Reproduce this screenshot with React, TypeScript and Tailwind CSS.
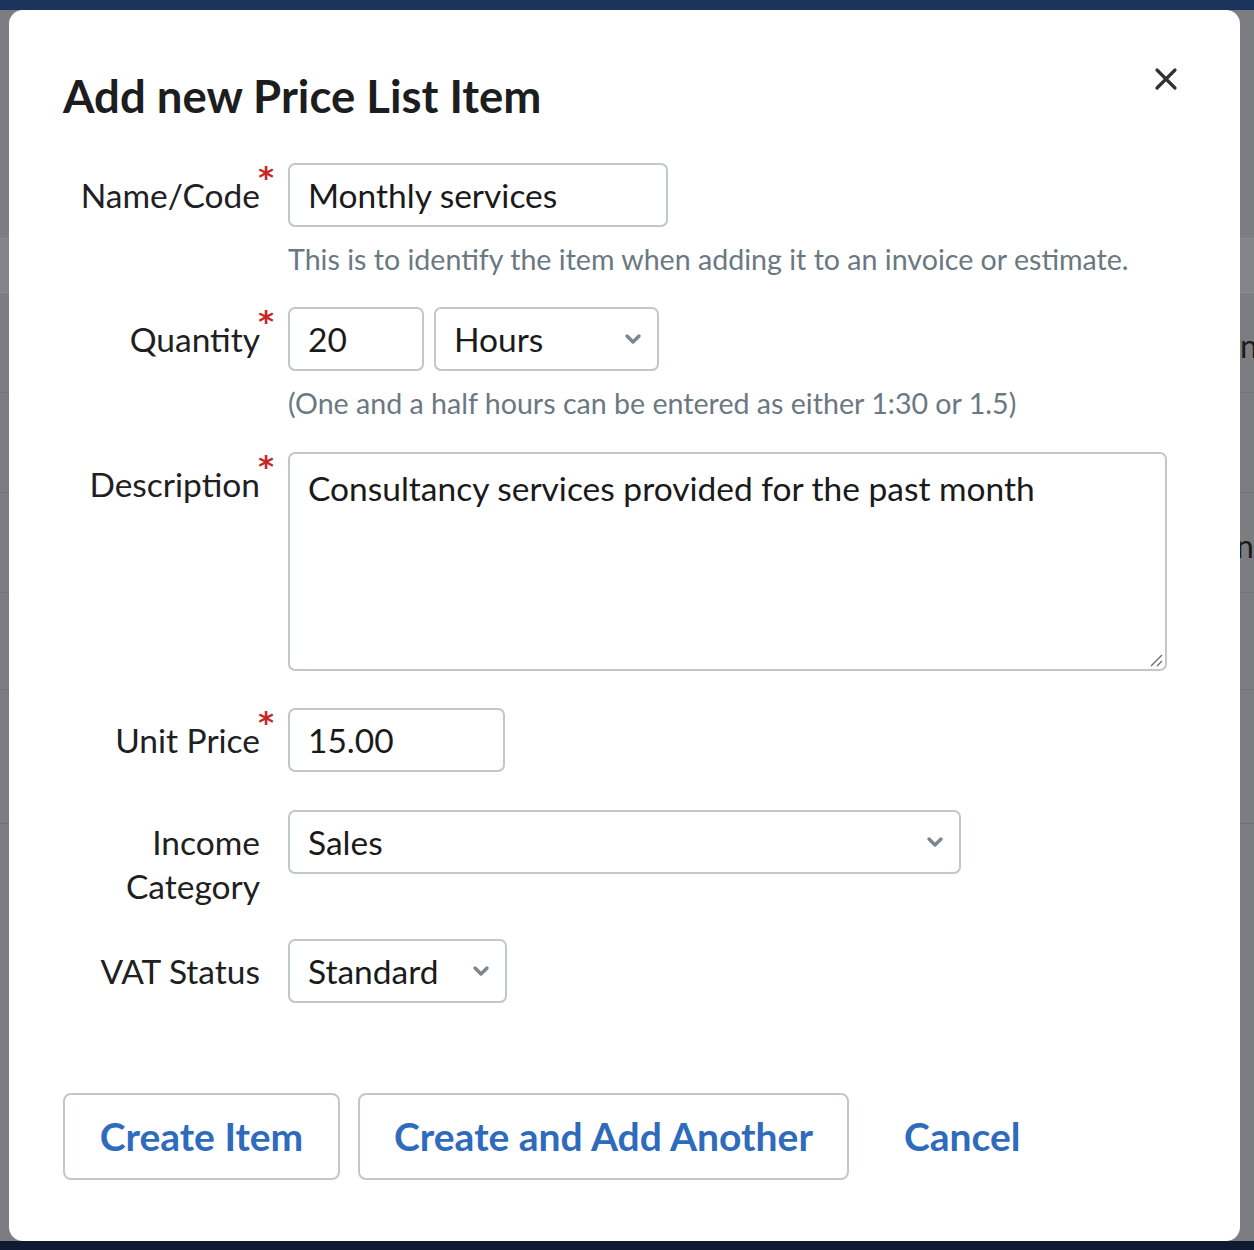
import React from "react";

const font = { fontFamily: "Lato, 'Noto Sans', sans-serif" };

function Chevron({ className = "" }: { className?: string }) {
  return (
    <svg className={className} width="18" height="12" viewBox="0 0 18 12" fill="none">
      <path d="M3 3 L9 9 L15 3" stroke="#7b868e" strokeWidth="3.4" strokeLinecap="round" strokeLinejoin="round" />
    </svg>
  );
}

function Label({ children, required }: { children: React.ReactNode; required?: boolean }) {
  return (
    <div className="w-[225px] shrink-0 pr-[28px] pt-[10px] text-right text-[33.5px] leading-[44px] text-[#1e2022]">
      <span className="relative">
        {children}
        {required && (
          <span
            className="absolute -right-[14px] -top-[12px] text-[30px] font-bold leading-none text-[#c62828]"
            style={{ fontFamily: "'DejaVu Sans', sans-serif" }}
          >
            *
          </span>
        )}
      </span>
    </div>
  );
}

const box = "h-[64px] rounded-[7px] border-2 border-[#c2c7cb] bg-white px-[18px] text-[33.5px] text-[#1a1a1a] flex items-center";

export default function App() {
  return (
    <div className="relative h-[1250px] w-[1254px] overflow-hidden bg-[#7c7d80]" style={font}>
      {/* background page */}
      <div className="h-[10px] bg-[#1a345c]" />
      <div className="absolute left-0 right-0 top-[238px] h-[55px] bg-[#838487] border-y border-[#8a8b8e]" />
      <div className="absolute left-0 right-0 top-[392px] border-t border-[#727376]" />
      <div className="absolute left-0 right-0 top-[492px] border-t border-[#727376]" />
      <div className="absolute left-0 right-0 top-[592px] border-t border-[#727376]" />
      <div className="absolute left-0 right-0 top-[689px] border-t border-[#727376]" />
      <div className="absolute left-0 right-0 top-[823px] border-t border-[#6f7073]" />
      <div className="absolute left-[1240px] top-[322px] text-[32px] text-[#1b1b1b]">n</div>
      <div className="absolute left-[1236px] top-[522px] text-[32px] text-[#1b1b1b]">nc</div>
      <div className="absolute bottom-0 left-0 right-0 h-[9px] bg-[#0f1b33]" />

      {/* modal */}
      <div className="absolute left-[9px] top-[10px] h-[1231px] w-[1231px] rounded-[14px] bg-white">
        <div className="relative px-[54px] pt-[58px]">
          <h1 className="text-[45.5px] font-bold leading-[56px] text-[#1c1d1f]">Add new Price List Item</h1>
          <svg className="absolute right-[62px] top-[57px]" width="24" height="24" viewBox="0 0 24 24" fill="none">
            <path d="M3 3 L21 21 M21 3 L3 21" stroke="#2d3236" strokeWidth="3.2" strokeLinecap="round" />
          </svg>

          <div className="mt-[39px] flex">
            <Label required>Name/Code</Label>
            <div>
              <div className={`${box} w-[380px]`}>Monthly services</div>
              <div className="mt-[14px] text-[28.6px] leading-[36px] text-[#6b7882]">
                This is to identify the item when adding it to an invoice or estimate.
              </div>
            </div>
          </div>

          <div className="mt-[30px] flex">
            <Label required>Quantity</Label>
            <div>
              <div className="flex gap-[10px]">
                <div className={`${box} w-[136px]`}>20</div>
                <div className={`${box} w-[225px] justify-between pr-[15px]`}>
                  Hours
                  <Chevron />
                </div>
              </div>
              <div className="mt-[14px] text-[28.6px] leading-[36px] text-[#6b7882]">
                (One and a half hours can be entered as either 1:30 or 1.5)
              </div>
            </div>
          </div>

          <div className="mt-[31px] flex">
            <Label required>Description</Label>
            <div className="relative h-[219px] w-[879px] rounded-[7px] border-2 border-[#c2c7cb] px-[18px] pt-[12px] text-[33.5px] leading-[44px] text-[#1a1a1a]">
              Consultancy services provided for the past month
              <svg className="absolute bottom-[2px] right-[2px]" width="16" height="16" viewBox="0 0 16 16" fill="none">
                <path d="M15 4 L4 15 M15 10 L10 15" stroke="#6b6f73" strokeWidth="1.4" />
              </svg>
            </div>
          </div>

          <div className="mt-[37px] flex">
            <Label required>Unit Price</Label>
            <div className={`${box} w-[217px]`}>15.00</div>
          </div>

          <div className="mt-[38px] flex">
            <Label>
              Income
              <br />
              Category
            </Label>
            <div className={`${box} w-[673px] justify-between pr-[15px]`}>
              Sales
              <Chevron />
            </div>
          </div>

          <div className="mt-[31px] flex">
            <Label>VAT Status</Label>
            <div className={`${box} w-[219px] justify-between pr-[15px]`}>
              Standard
              <Chevron />
            </div>
          </div>

          <div className="mt-[90px] flex items-center">
            <button className="h-[87px] w-[277px] rounded-[8px] border-2 border-[#c2c7cb] text-[39px] font-bold text-[#2e6bbd]">
              Create Item
            </button>
            <button className="ml-[18px] h-[87px] w-[491px] rounded-[8px] border-2 border-[#c2c7cb] text-[39px] font-bold text-[#2e6bbd]">
              Create and Add Another
            </button>
            <button className="ml-[55px] text-[39px] font-bold text-[#2e6bbd]">Cancel</button>
          </div>
        </div>
      </div>
    </div>
  );
}
